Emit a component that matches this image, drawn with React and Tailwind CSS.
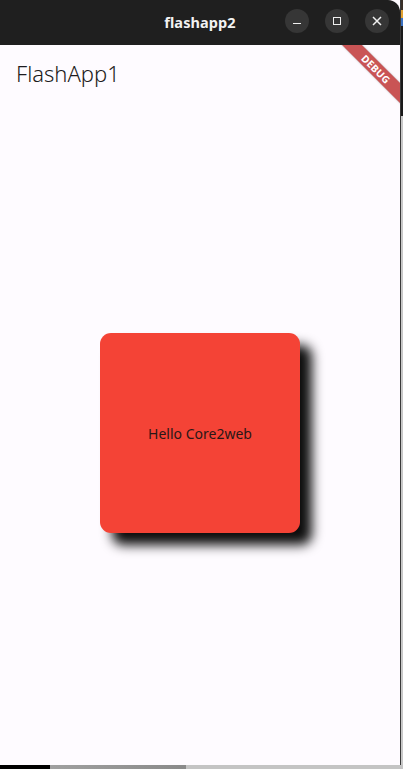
export default function App() {
  return (
    <div className="relative w-[403px] h-[769px] overflow-hidden bg-[#c4c4c4] flex flex-col">
      <div className="flex flex-1 min-h-0">
        {/* window */}
        <div className="w-[401px] flex flex-col border-r border-[#3a3a3a] bg-[#fefbff]">
          {/* title bar */}
          <div className="h-[45px] shrink-0 bg-[#1f1f1f] rounded-tr-[12px] relative flex items-center justify-center">
            <span className="text-[#f2f2f2] text-[14.5px] font-bold font-['Noto_Sans',sans-serif] tracking-[0.1px]">flashapp2</span>
            <div className="absolute right-[11px] top-[9px] flex gap-[16px]">
              <div className="w-[24px] h-[24px] rounded-full bg-[#363636] flex items-center justify-center">
                <div className="w-[8px] h-[1.5px] bg-[#f0f0f0] mt-[5px]" />
              </div>
              <div className="w-[24px] h-[24px] rounded-full bg-[#363636] flex items-center justify-center">
                <div className="w-[8px] h-[8px] border-[1.5px] border-[#f0f0f0]" />
              </div>
              <div className="w-[24px] h-[24px] rounded-full bg-[#363636] flex items-center justify-center">
                <svg width="10" height="10" viewBox="0 0 10 10">
                  <path d="M1 1 L9 9 M9 1 L1 9" stroke="#f0f0f0" strokeWidth="1.5" />
                </svg>
              </div>
            </div>
          </div>
          {/* content */}
          <div className="relative flex-1 flex flex-col overflow-hidden">
            <div className="h-[56px] shrink-0 flex items-center pl-[16px]">
              <span className="text-[22px] text-[#1d1b20] font-['Noto_Sans',sans-serif] font-light">FlashApp1</span>
            </div>
            <div className="flex-1 flex items-center justify-center">
              <div className="w-[200px] h-[200px] bg-[#f44336] rounded-[11px] shadow-[12px_12px_12px_rgba(0,0,0,0.95)] flex items-center justify-center">
                <span className="text-[14px] text-[#2a1716] font-['Noto_Sans',sans-serif]">Hello Core2web</span>
              </div>
            </div>
            {/* debug banner */}
            <div className="absolute top-[17px] left-[316px] w-[120px] h-[14px] rotate-45 bg-[rgba(183,28,28,0.75)] flex items-center justify-center shadow-[0_0_2px_rgba(0,0,0,0.3)]">
              <span className="text-white text-[10px] font-bold font-['Noto_Sans',sans-serif] leading-none tracking-[0.3px]">DEBUG</span>
            </div>
          </div>
        </div>
        {/* desktop strip right */}
        <div className="flex-1 flex flex-col">
          <div className="h-[10px] bg-[#3a3028]" />
          <div className="h-[8px] bg-[#e0a030]" />
          <div className="h-[8px] bg-[#3a70c0]" />
          <div className="h-[90px] bg-[#1a1a1a]" />
          <div className="flex-1 bg-[#c8c8c8]" />
        </div>
      </div>
      <div className="h-[4px] shrink-0 flex">
        <div className="w-[50px] bg-black" />
        <div className="w-[136px] bg-gradient-to-r from-[#a0a0a0] to-[#8a8a8a]" />
        <div className="flex-1 bg-[#c4c4c4]" />
      </div>
    </div>
  );
}
